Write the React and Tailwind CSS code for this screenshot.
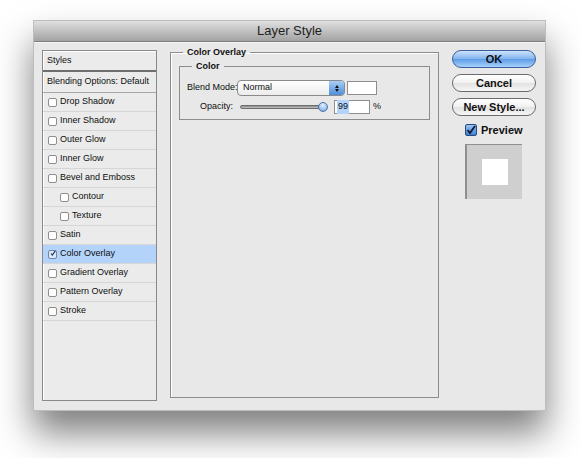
import React from "react";

const ui = { fontFamily: '"Liberation Sans", Arial, sans-serif' };

function Box({ checked }) {
  if (checked) {
    return (
      <span className="flex h-[9px] w-[9px] shrink-0 items-center justify-center rounded-[2px] border border-[#6f86a8] bg-[#dbe8fb]">
        <svg width="9" height="9" viewBox="0 0 9 9" className="-mt-[2px] ml-[1px]">
          <path d="M1.5 4.5 L3.5 7 L8 0.5" fill="none" stroke="#1d2f4d" strokeWidth="1.6" />
        </svg>
      </span>
    );
  }
  return <span className="h-[9px] w-[9px] shrink-0 rounded-[2px] border border-[#8e8e8e] bg-white" />;
}

const effects = [
  { label: "Drop Shadow" },
  { label: "Inner Shadow" },
  { label: "Outer Glow" },
  { label: "Inner Glow" },
  { label: "Bevel and Emboss" },
  { label: "Contour", sub: true },
  { label: "Texture", sub: true },
  { label: "Satin" },
  { label: "Color Overlay", on: true },
  { label: "Gradient Overlay" },
  { label: "Pattern Overlay" },
  { label: "Stroke" },
];

function StyleList() {
  return (
    <div className="flex h-[351px] w-[115px] flex-col border border-[#8a8a8a] bg-[#ebebeb] text-[9px] text-[#0e0e0e] shadow-[inset_1px_1px_0_#fff]">
      <div className="flex h-[21px] items-center border-b-2 border-[#6e6e6e] px-[4px] pt-[1px]">Styles</div>
      <div className="flex h-[21px] items-center whitespace-nowrap border-b border-[#a8a8a8] px-[4px]">
        Blending Options: Default
      </div>
      {effects.map((e) => (
        <div
          key={e.label}
          className={`flex h-[19px] items-center gap-[3px] whitespace-nowrap border-b border-[#d6d6d6] ${e.sub ? "pl-[17px]" : "pl-[5px]"} ${e.on ? "bg-[#b3d3fa]" : ""}`}
        >
          <Box checked={e.on} />
          <span>{e.label}</span>
        </div>
      ))}
    </div>
  );
}

function Button({ children, primary }) {
  return (
    <div
      className={`flex h-[18px] w-[84px] items-center justify-center rounded-full border text-[11px] font-bold text-[#111] ${
        primary
          ? "border-[#3a5f9c] bg-[linear-gradient(#cfe3fb,#7fb3ee_50%,#5d9de6_51%,#a7d0fb)]"
          : "border-[#6b6b6b] bg-[linear-gradient(#ffffff,#f1f1f1_50%,#e2e2e2_51%,#f6f6f6)]"
      }`}
    >
      {children}
    </div>
  );
}

function OverlayPanel() {
  return (
    <fieldset className="h-[352px] w-[269px] border border-[#8c8c8c] px-[8px] shadow-[inset_1px_1px_0_#fff]">
      <legend className="ml-[4px] px-[4px] text-[9px] font-bold text-[#0e0e0e]">Color Overlay</legend>
      <fieldset className="h-[60px] border border-[#8c8c8c] pl-[7px]">
        <legend className="ml-[5px] px-[4px] text-[9px] font-bold text-[#0e0e0e]">Color</legend>
        <div className="mt-[7px] flex items-center text-[9px] text-[#0e0e0e]">
          <span className="w-[50px] whitespace-nowrap">Blend Mode:</span>
          <div className="flex h-[16px] w-[108px] items-center justify-between rounded-[4px] border border-[#8a8a8a] bg-[linear-gradient(#ffffff,#ececec)] pl-[5px]">
            <span>Normal</span>
            <div className="flex h-[14px] w-[15px] flex-col items-center justify-center gap-[1px] rounded-r-[3px] bg-[linear-gradient(#a9cdf6,#4f8edb)]">
              <span className="h-0 w-0 border-x-[2.5px] border-b-[3px] border-x-transparent border-b-[#111]" />
              <span className="h-0 w-0 border-x-[2.5px] border-t-[3px] border-x-transparent border-t-[#111]" />
            </div>
          </div>
          <div className="ml-[2px] h-[14px] w-[30px] border border-[#8e8e8e] bg-white" />
        </div>
        <div className="mt-[4px] flex items-center text-[9px] text-[#0e0e0e]">
          <span className="w-[46px] text-right">Opacity:</span>
          <div className="relative ml-[7px] flex h-[10px] w-[88px] items-center">
            <div className="h-[4px] w-[84px] rounded-full border border-[#6e6e6e] bg-[linear-gradient(#8a8a8a,#c4c4c4)]" />
            <span className="absolute right-0 top-0 h-[10px] w-[10px] rounded-full border border-[#4f73a8] bg-[radial-gradient(circle_at_50%_30%,#e6f1ff,#6a9fe0)]" />
          </div>
          <div className="ml-[6px] flex h-[14px] w-[36px] items-center border border-[#8e8e8e] bg-white pl-[2px]">
            <span className="bg-[#b3d3fa] px-[1px]">99</span>
          </div>
          <span className="ml-[3px]">%</span>
        </div>
      </fieldset>
    </fieldset>
  );
}

export default function App() {
  return (
    <div className="h-[458px] w-[580px] overflow-hidden bg-white pl-[33px] pt-[20px]" style={ui}>
      <div className="flex h-[391px] w-[513px] flex-col border border-[#bdbdbd] bg-[#e8e8e8] shadow-[0_22px_34px_rgba(0,0,0,0.5)]">
        <div className="flex h-[21px] shrink-0 items-center justify-center border-b border-[#808080] bg-[linear-gradient(#e0e0e0,#a2a2a2)] text-[13px] text-[#1e1e1e]">
          Layer Style
        </div>
        <div className="flex border-t border-[#f4f4f4] pl-[8px] pt-[7px]">
          <StyleList />
          <div className="ml-[13px] -mt-[4px]">
            <OverlayPanel />
          </div>
          <div className="ml-[13px] flex flex-col">
            <Button primary>OK</Button>
            <div className="mt-[6px]">
              <Button>Cancel</Button>
            </div>
            <div className="mt-[6px]">
              <Button>New Style...</Button>
            </div>
            <div className="mt-[6px] flex items-center gap-[4px] pl-[13px] text-[11px] font-bold text-[#111]">
              <span className="flex h-[12px] w-[12px] items-center justify-center rounded-[2px] border border-[#274a7d] bg-[linear-gradient(#9cc4f3,#3f7fd1)]">
                <svg width="10" height="10" viewBox="0 0 10 10">
                  <path d="M1.5 5 L4 8 L9 1" fill="none" stroke="#0d1a30" strokeWidth="1.8" />
                </svg>
              </span>
              Preview
            </div>
            <div className="ml-[13px] mt-[5px] flex h-[55px] w-[57px] items-center justify-center border-l-2 border-t border-[#8f8f8f] bg-[#cfcfcf]">
              <div className="h-[26px] w-[26px] bg-white" />
            </div>
          </div>
        </div>
      </div>
    </div>
  );
}
